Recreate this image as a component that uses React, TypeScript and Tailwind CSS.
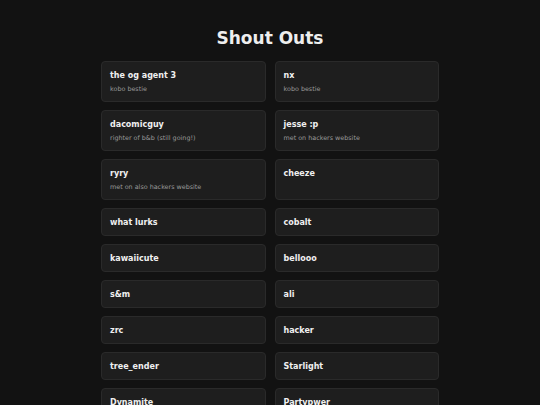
import React from "react";

type Shout = { name: string; note?: string };

const shouts: Shout[] = [
  { name: "the og agent 3", note: "kobo bestie" },
  { name: "nx", note: "kobo bestie" },
  { name: "dacomicguy", note: "righter of b&b (still going!)" },
  { name: "jesse :p", note: "met on hackers website" },
  { name: "ryry", note: "met on also hackers website" },
  { name: "cheeze" },
  { name: "what lurks" },
  { name: "cobalt" },
  { name: "kawaiicute" },
  { name: "bellooo" },
  { name: "s&m" },
  { name: "ali" },
  { name: "zrc" },
  { name: "hacker" },
  { name: "tree_ender" },
  { name: "Starlight" },
  { name: "Dynamite" },
  { name: "Partypwer" },
];

const App: React.FC = () => {
  return (
    <div
      className="min-h-screen bg-[#121212] text-[#eeeeee]"
      style={{ fontFamily: '"DejaVu Sans", Verdana, sans-serif' }}
    >
      <div className="mx-auto w-[338px] pt-[26px] pb-8">
        <h1 className="text-center text-[17px] font-bold leading-[24px] mb-[11px]">Shout Outs</h1>
        <div className="grid grid-cols-2 gap-x-[9px] gap-y-2">
          {shouts.map((s) => (
            <div
              key={s.name}
              className="rounded-[4px] border border-[#2a2a2a] bg-[#1e1e1e] px-[8px] pt-[8px] pb-[6px]"
            >
              <div className="text-[8px] font-bold leading-[12px] text-[#f0f0f0]">{s.name}</div>
              {s.note && (
                <div className="mt-[2px] text-[6.4px] leading-[11px] text-[#9a9a9a]">{s.note}</div>
              )}
            </div>
          ))}
        </div>
      </div>
    </div>
  );
};

export default App;
